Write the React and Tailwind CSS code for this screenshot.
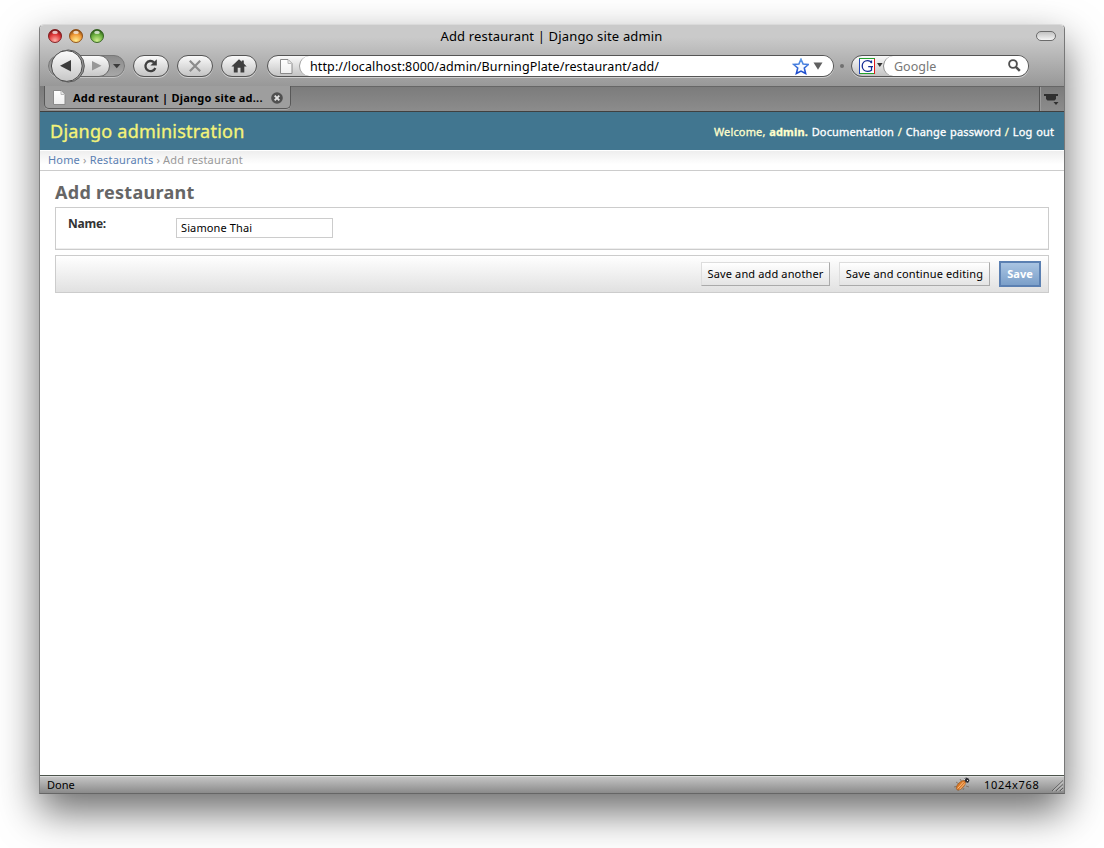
import React from "react";

const PILL =
  "h-[22px] rounded-full border border-[#555] bg-linear-to-b from-[#fafafa] to-[#c4c4c4] shadow-[0_1px_0_#d0d0d0]";

function Light({ dark, mid, glow, id }) {
  return (
    <svg width="14" height="14" viewBox="0 0 14 14">
      <defs>
        <radialGradient id={id} cx="50%" cy="85%" r="80%">
          <stop offset="0" stopColor={glow} />
          <stop offset="0.6" stopColor={mid} />
          <stop offset="1" stopColor={dark} />
        </radialGradient>
      </defs>
      <circle cx="7" cy="7" r="6.5" fill={`url(#${id})`} stroke={dark} strokeWidth="0.9" />
      <ellipse cx="7" cy="3.4" rx="2.8" ry="1.7" fill="#fff" opacity="0.7" />
    </svg>
  );
}

function PageIcon() {
  return (
    <svg width="13" height="15" viewBox="0 0 13 15">
      <defs>
        <linearGradient id="paper" x1="0" y1="0" x2="0" y2="1">
          <stop offset="0" stopColor="#fff" />
          <stop offset="1" stopColor="#efefef" />
        </linearGradient>
      </defs>
      <path d="M.5.5h7.5l4 4v10H.5z" fill="url(#paper)" stroke="#8a8a8a" />
      <path d="M8 1v3.5h3.5" fill="#ededed" stroke="#b8b8b8" />
    </svg>
  );
}

function BackForward() {
  return (
    <svg width="78" height="34" viewBox="0 0 78 34">
      <defs>
        <linearGradient id="face" x1="0" y1="0" x2="0" y2="1">
          <stop offset="0" stopColor="#fcfcfc" />
          <stop offset="1" stopColor="#c6c6c6" />
        </linearGradient>
        <linearGradient id="well" x1="0" y1="0" x2="0" y2="1">
          <stop offset="0" stopColor="#8a8a8a" />
          <stop offset="1" stopColor="#a8a8a8" />
        </linearGradient>
      </defs>
      <rect x="0.5" y="7.5" width="76" height="21" rx="10.5" fill="none" stroke="#c4c4c4" />
      <rect x="0.5" y="6.5" width="76" height="21" rx="10.5" fill="url(#well)" stroke="#787878" />
      <rect x="20.5" y="6.5" width="41" height="21" rx="10.5" fill="url(#face)" stroke="#666" />
      <circle cx="20.3" cy="17" r="16" fill="#9a9a9a" stroke="#555" />
      <circle cx="18.8" cy="17" r="15.4" fill="url(#face)" stroke="#4a4a4a" />
      <path d="M12 16.8 23 11v11.6z" fill="#3c3c3c" />
      <path d="M53.5 16.8 44 12v9.6z" fill="#989898" />
      <path d="M65 15h7.5l-3.75 4.3z" fill="#3c3c3c" />
    </svg>
  );
}

function ToolButton({ children }) {
  return <button className={`${PILL} flex w-[36px] items-center justify-center`}>{children}</button>;
}

function TitleBar() {
  return (
    <div className="grid h-[22px] grid-cols-[1fr_auto_1fr] items-center pr-[8px] pl-[8px]">
      <div className="flex gap-[7px]">
        <Light id="r" dark="#7a1518" mid="#e0383a" glow="#ffb0a8" />
        <Light id="y" dark="#8a4a10" mid="#f09a38" glow="#ffee90" />
        <Light id="g" dark="#2c5c18" mid="#6cb040" glow="#d0f090" />
      </div>
      <div className="-ml-px text-[13px] leading-[22px] tracking-[0.16px] whitespace-nowrap">
        Add restaurant | Django site admin
      </div>
      <div className="h-[10px] w-[20px] justify-self-end rounded-[5px] border border-[#6b6b6b] bg-linear-to-b from-[#c2c2c2] to-[#f4f4f4]" />
    </div>
  );
}

function Toolbar() {
  return (
    <div className="flex h-[38px] items-center pl-[8px]">
      <BackForward />
      <div className="ml-[7px] flex gap-[8px]">
        <ToolButton>
          <svg width="16" height="16" viewBox="0 0 16 16">
            <path d="M12.3 10A5.1 5.1 0 1 1 11 4.3" fill="none" stroke="#3f3f3f" strokeWidth="2.3" />
            <path d="M13.8 1.2v6.4H7.4z" fill="#3f3f3f" />
          </svg>
        </ToolButton>
        <ToolButton>
          <svg width="14" height="14" viewBox="0 0 14 14">
            <path d="M1.8 1.8l10.4 10.4M12.2 1.8L1.8 12.2" stroke="#8c8c8c" strokeWidth="2.2" />
          </svg>
        </ToolButton>
        <ToolButton>
          <svg width="16" height="14" viewBox="0 0 16 14">
            <path d="M8 .2.4 7.6h2.4V13.4h3.9V8.8h2.8v4.6h3.8V7.6h2.4L12.8 4.6V1.5h-2v1.2z" fill="#3f3f3f" />
          </svg>
        </ToolButton>
      </div>
      <div className={`${PILL} ml-[10px] flex w-[567px] items-center pl-[12px]`}>
        <PageIcon />
        <div className="ml-[6px] flex h-[20px] flex-1 items-center rounded-full border-l border-[#999] bg-white pr-[10px] pl-[10px]">
          <span className="flex-1 pt-[2px] text-[12.5px] leading-[20px] tracking-[0.11px]">
            http://localhost:8000/admin/BurningPlate/restaurant/add/
          </span>
          <svg width="17" height="17" viewBox="0 0 17 17">
            <defs>
              <linearGradient id="star" x1="0" y1="0" x2="0" y2="1">
                <stop offset="0" stopColor="#5d9be8" />
                <stop offset="1" stopColor="#1a48cc" />
              </linearGradient>
            </defs>
            <path
              d="M9 1.2l2.1 4.9 5.2.4-4 3.5 1.3 5.5-4.6-2.4-4.6 2.4 1.3-5.5-4-3.5 5.2-.4z"
              fill="#f6faff"
              stroke="url(#star)"
              strokeWidth="1.6"
            />
          </svg>
          <svg className="ml-[4px]" width="10" height="8" viewBox="0 0 10 8">
            <path d="M.5.5h9L5 7.8z" fill="#606060" />
          </svg>
        </div>
      </div>
      <div className="ml-[6px] size-[4px] rounded-full bg-[#707070]" />
      <div className={`${PILL} ml-[7px] flex w-[178px] items-center pl-[7px]`}>
        <svg width="16" height="16" viewBox="0 0 16 16" shapeRendering="crispEdges">
          <path d="M0 0h16v16H0z" fill="#fff" />
          <path d="M0 0h16v1H0z" fill="#24a02c" />
          <path d="M0 1h1v15H0z" fill="#2448b8" />
          <path d="M15 1h1v15h-1z" fill="#e01818" />
          <path d="M1 15h14v1H1z" fill="#24a02c" />
          <path
            d="M12.5 5.2V2.6M12.5 5C11.7 3.2 10.4 2.6 8.6 2.6 5.4 2.6 3.2 4.8 3.2 8s2.2 5.4 5.4 5.4c1.6 0 3-.5 3.9-1.2V8.6M9.2 8.6H14"
            fill="none"
            stroke="#142c94"
            strokeWidth="1.3"
            shapeRendering="auto"
          />
        </svg>
        <svg className="mt-[-3px] ml-[2px]" width="6" height="4" viewBox="0 0 6 4">
          <path d="M0 0h5.6L2.8 4z" fill="#333" />
        </svg>
        <div className="flex h-[20px] flex-1 items-center rounded-full border-l border-[#888] bg-white pr-[7px] pl-[10px]">
          <span className="flex-1 pt-[2px] text-[12.5px] leading-[20px] text-[#777]">Google</span>
          <svg className="mb-[2px]" width="13" height="13" viewBox="0 0 13 13">
            <circle cx="5" cy="5" r="3.9" fill="none" stroke="#505050" strokeWidth="1.9" />
            <path d="M7.8 7.8l4 4" stroke="#505050" strokeWidth="2.5" />
          </svg>
        </div>
      </div>
    </div>
  );
}

function TabBar() {
  return (
    <div className="flex h-[26px] border-b border-[#404040] bg-linear-to-b from-[#7b7b7b] to-[#8c8c8c]">
      <div className="ml-[4px] flex h-[23px] w-[247px] items-center rounded-b-[5px] border-x border-b border-[#585858] bg-[#9e9e9e] pl-[8px] shadow-[0_1px_0_#a6a6a6]">
        <PageIcon />
        <span className="ml-[7px] w-[198px] pt-[2px] text-[11px] leading-[22px] font-bold tracking-[0.22px] whitespace-nowrap">
          Add restaurant | Django site ad...
        </span>
        <svg className="mt-[2px]" width="12" height="12" viewBox="0 0 12 12">
          <circle cx="6" cy="6" r="5.8" fill="#505050" />
          <path d="M3.7 3.7l4.6 4.6M8.3 3.7L3.7 8.3" stroke="#e4e4e4" strokeWidth="1.9" />
        </svg>
      </div>
      <div className="flex-1 border-t border-[#666]" />
      <div className="flex w-[25px] border-t border-l border-t-[#666] border-l-[#555] pt-[7px] pl-[4px] shadow-[inset_1px_0_0_#9c9c9c]">
        <svg width="15" height="12" viewBox="0 0 15 12">
          <path d="M0 0h14v2h-2v3l-1.500 1.500H3.500L2 5V2H0zM9.500 8h5L12 11z" fill="#303030" />
        </svg>
      </div>
    </div>
  );
}

function DjangoHeader() {
  return (
    <div className="flex h-[38px] items-center justify-between bg-[#417690] pr-[10px] pl-[10px]">
      <h1 className="text-[18px] leading-[38px] tracking-[0.24px] text-[#f4f379] [-webkit-text-stroke:0.35px_#f4f379]">
        Django administration
      </h1>
      <div className="mt-px text-[11px] leading-[20px] tracking-[0.15px] [word-spacing:0.7px] whitespace-nowrap text-[#ffc] [-webkit-text-stroke:0.3px]">
        Welcome, <b>admin.</b> <a className="text-white">Documentation</a> /{" "}
        <a className="text-white">Change password</a> / <a className="text-white">Log out</a>
      </div>
    </div>
  );
}

function Breadcrumbs() {
  return (
    <div className="h-[21px] border-t border-b border-t-white border-b-[#ccc] bg-linear-to-b from-[#eee] to-white to-70% pl-[8px] text-[11px] leading-[17px] tracking-[0.175px] text-[#999]">
      <a className="text-[#5b80b2]">Home</a> › <a className="text-[#5b80b2]">Restaurants</a> › Add restaurant
    </div>
  );
}

const SUBMIT =
  "h-[24px] border border-t-[#ddd] border-r-[#aaa] border-b-[#aaa] border-l-[#ddd] bg-linear-to-b from-white to-[#e4e4e4] text-[11px] leading-[22px] tracking-[0.14px] whitespace-nowrap text-black";

function RestaurantForm() {
  return (
    <form className="flex-1 px-[15px] pt-[10px]">
      <h2 className="h-[26px] text-[18px] leading-[22px] font-bold tracking-[0.28px] text-[#666]">Add restaurant</h2>
      <div className="flex h-[43px] border border-[#ccc] pl-[12px] shadow-[inset_0_-1px_0_#eee]">
        <label className="w-[108px] pt-[6px] text-[12px] leading-[20px] font-bold tracking-[-0.25px] text-[#333]">
          Name:
        </label>
        <input
          className="mt-[10px] h-[20px] w-[157px] border border-[#ccc] pb-[2px] pl-[4px] text-[11px] tracking-[0.12px] text-black"
          defaultValue="Siamone Thai"
        />
      </div>
      <div className="mt-[5px] flex h-[38px] items-center justify-end gap-[9px] border border-[#ccc] bg-linear-to-b from-white to-[#e1e1e1] pr-[7px]">
        <button type="button" className={`${SUBMIT} w-[129px]`}>
          Save and add another
        </button>
        <button type="button" className={`${SUBMIT} w-[151px]`}>
          Save and continue editing
        </button>
        <button
          type="button"
          className="h-[26px] w-[42px] border-2 border-[#5b80b2] bg-linear-to-b from-[#a9c4e2] to-[#7b9fc9] text-[11px] leading-[22px] font-bold text-white"
        >
          Save
        </button>
      </div>
    </form>
  );
}

function StatusBar() {
  return (
    <div className="flex h-[18px] items-center border-t border-[#4c544c] bg-linear-to-b from-[#c8c8c8] to-[#8b8b8b] pl-[7px] text-[11px] leading-[17px] shadow-[inset_0_1px_0_#ddd]">
      <span className="flex-1">Done</span>
      <svg width="16" height="15" viewBox="0 0 16 15">
        <path
          d="M2 5l3 2M0 10l4-1M4 14l1-3M9 13l1-2M12 9l3 1M6 2l2 3"
          stroke="#7a6a5c"
          strokeWidth="0.8"
        />
        <ellipse cx="7" cy="8.2" rx="6" ry="3" transform="rotate(-46 7 8.2)" fill="#d87828" stroke="#9c5a20" strokeWidth="0.6" />
        <path d="M3.5 11.5l6-6.5M5.5 12.3l5.5-6" stroke="#ffc890" strokeWidth="0.9" />
        <path d="M10 2l2-1.5 2.5 1 1 2-1.5 2.5-2.5-1z" fill="#2e2e34" />
        <path d="M10 2.8l1.5-1.2M13 3l1 1" stroke="#eee" />
      </svg>
      <span className="ml-[14px] w-[56px] tracking-[0.7px] whitespace-nowrap">1024x768</span>
      <svg className="ml-[11px]" width="13" height="15" viewBox="0 0 13 15">
        <path d="M1 14L12 3.5M5 14l7-6.5M9 14l3-3" stroke="#5c5c5c" strokeWidth="1" />
        <path d="M2.3 14L12 4.8M6.3 14L12 8.8M10.3 14l1.7-1.7" stroke="#d0d0d0" strokeWidth="0.9" />
      </svg>
    </div>
  );
}

export default function App() {
  return (
    <div className="h-[848px] w-[1104px] overflow-hidden bg-white px-[39px] pt-[24px] font-['Noto_Sans','Open_Sans',sans-serif] text-black">
      <div className="flex h-[770px] w-[1026px] flex-col overflow-hidden rounded-t-[5px] border border-t-[#dadada] border-r-[#777] border-b-[#666] border-l-[#808080] bg-white shadow-[0_18px_40px_rgba(0,0,0,0.58)]">
        <div className="h-[61px] bg-linear-to-b from-[#cacaca] from-20% to-[#989898]">
          <TitleBar />
          <Toolbar />
        </div>
        <TabBar />
        <DjangoHeader />
        <Breadcrumbs />
        <RestaurantForm />
        <StatusBar />
      </div>
    </div>
  );
}
